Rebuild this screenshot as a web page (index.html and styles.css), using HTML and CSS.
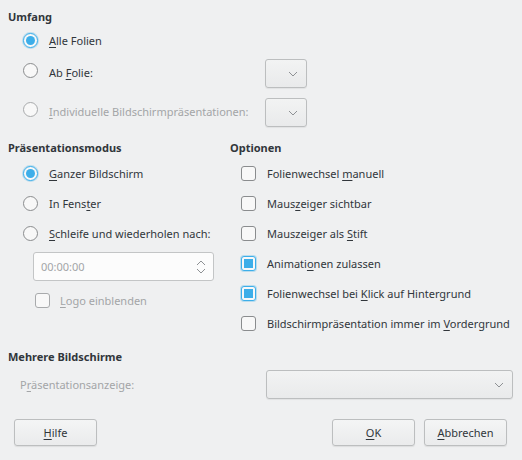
FILE: index.html
```html
<!DOCTYPE html>
<html lang="de">
<head>
<meta charset="utf-8">
<link rel="stylesheet" href="styles.css">
</head>
<body>
<div class="dialog">
  <h2 class="heading">Umfang</h2>
  <div class="range">
    <div class="row r-all">
      <span class="radio checked"></span><span class="label"><u>A</u>lle Folien</span>
    </div>
    <div class="row r-from">
      <span class="radio"></span><span class="label">Ab <u>F</u>olie:</span>
      <span class="combo small"><svg class="chev" viewBox="0 0 10 6"><path d="M1 1l4 4 4-4"/></svg></span>
    </div>
    <div class="row r-custom disabled">
      <span class="radio"></span><span class="label"><u>I</u>ndividuelle Bildschirmpräsentationen:</span>
      <span class="combo small"><svg class="chev" viewBox="0 0 10 6"><path d="M1 1l4 4 4-4"/></svg></span>
    </div>
  </div>

  <div class="columns">
    <div class="col left">
      <h2 class="heading">Präsentationsmodus</h2>
      <div class="row"><span class="radio checked"></span><span class="label"><u>G</u>anzer Bildschirm</span></div>
      <div class="row"><span class="radio"></span><span class="label">In Fens<u>t</u>er</span></div>
      <div class="row"><span class="radio"></span><span class="label"><u>S</u>chleife und wiederholen nach:</span></div>
      <div class="spin">
        <span class="spin-text">00:00:00</span>
        <svg class="spin-arrows" viewBox="0 0 10 14"><path d="M1 5l4-4 4 4M1 9l4 4 4-4"/></svg>
      </div>
      <div class="row logo disabled"><span class="check"></span><span class="label"><u>L</u>ogo einblenden</span></div>
    </div>
    <div class="col right">
      <h2 class="heading">Optionen</h2>
      <div class="row"><span class="check"></span><span class="label">Folienwechsel <u>m</u>anuell</span></div>
      <div class="row"><span class="check"></span><span class="label">Maus<u>z</u>eiger sichtbar</span></div>
      <div class="row"><span class="check"></span><span class="label">Mauszeiger als <u>S</u>tift</span></div>
      <div class="row"><span class="check checked"></span><span class="label">Animati<u>o</u>nen zulassen</span></div>
      <div class="row"><span class="check checked"></span><span class="label">Folienwechsel bei <u>K</u>lick auf Hintergrund</span></div>
      <div class="row"><span class="check"></span><span class="label">Bildschirmpräsentation immer im <u>V</u>ordergrund</span></div>
    </div>
  </div>

  <h2 class="heading multi">Mehrere Bildschirme</h2>
  <div class="display-row disabled">
    <span class="label">P<u>r</u>äsentationsanzeige:</span>
    <span class="combo wide"><svg class="chev" viewBox="0 0 10 6"><path d="M1 1l4 4 4-4"/></svg></span>
  </div>

  <div class="buttons">
    <button class="btn"><u>H</u>ilfe</button>
    <span class="spacer"></span>
    <button class="btn"><u>O</u>K</button>
    <button class="btn"><u>A</u>bbrechen</button>
  </div>
</div>
</body>
</html>
```

FILE: styles.css
```css
* { box-sizing: border-box; }
html, body {
  margin: 0;
  padding: 0;
  background: #eff0f1;
}
body {
  font-family: "Noto Sans", "DejaVu Sans", sans-serif;
  font-size: 11px;
  color: #31363b;
  width: 522px;
  height: 460px;
  overflow: hidden;
}
u { text-decoration: underline; text-underline-offset: 2px; text-decoration-thickness: 1px; }
.dialog {
  padding: 9px 8px 0 8px;
}
.heading {
  margin: 0;
  font-size: 11px;
  font-weight: bold;
  line-height: 16px;
  height: 16px;
}
.row {
  display: flex;
  align-items: center;
  height: 30px;
}
.radio {
  width: 15px;
  height: 15px;
  border-radius: 50%;
  border: 1px solid #8a8c8e;
  background: #f8f8f8;
  flex: none;
  position: relative;
}
.radio.checked {
  border: 1px solid #3daee9;
  box-shadow: 0 0 0 1px rgba(61,174,233,0.3);
}
.radio.checked::after {
  content: "";
  position: absolute;
  left: 2px; top: 2px;
  width: 9px; height: 9px;
  border-radius: 50%;
  background: #3daee9;
}
.check {
  width: 15px;
  height: 15px;
  border-radius: 3px;
  border: 1px solid #8a8c8e;
  background: #f8f8f8;
  flex: none;
  position: relative;
}
.check.checked {
  border-color: #3daee9;
  box-shadow: 0 0 0 1px rgba(61,174,233,0.3);
}
.check.checked::after {
  content: "";
  position: absolute;
  left: 2px; top: 2px;
  width: 9px; height: 9px;
  background: #3daee9;
}
.disabled .label { color: #a3a5a7; }
.disabled .radio, .disabled .check { border-color: #a8aaac; }

/* Umfang */
.range { padding-left: 15px; }
.range .label { margin-left: 11px; }
.r-all { height: 31px; margin-top: 0; }
.r-from, .r-custom { height: 39px; align-items: flex-start; }
.r-from { margin-top: 3px; }
.r-from .radio, .r-custom .radio { margin-top: 4px; }
.r-from .label, .r-custom .label { margin-top: 6px; }
.combo {
  margin-left: auto;
  height: 29px;
  border: 1px solid #bcbebf;
  border-radius: 3px;
  background: linear-gradient(#f2f3f3, #e9eaeb);
  display: flex;
  align-items: center;
  justify-content: flex-end;
  padding-right: 8px;
  box-shadow: 0 1px 1px rgba(0,0,0,0.06);
}
.combo.small { width: 42px; margin-right: 207px; }
.chev {
  width: 10px; height: 6px;
  fill: none;
  stroke: #8e9194;
  stroke-width: 1;
}

/* columns */
.columns {
  display: grid;
  grid-template-columns: 222px 1fr;
  margin-top: 3px;
}
.col .heading { margin-bottom: 2px; }
.left .row { padding-left: 15px; }
.left .row .label { margin-left: 11px; }
.right .row { padding-left: 11px; }
.right .row .label { margin-left: 11px; }
.spin {
  margin: 4px 0 0 25px;
  width: 181px;
  height: 29px;
  border: 1px solid #c3c5c6;
  border-radius: 3px;
  background: #fcfcfc;
  display: flex;
  align-items: center;
  padding: 0 7px 0 7px;
}
.spin-text { color: #a3a5a7; flex: 1; }
.spin-arrows {
  width: 10px; height: 14px;
  fill: none;
  stroke: #8e9194;
  stroke-width: 1;
}
.left .row.logo { padding-left: 27px; height: 36px; padding-top: 2px; }
.left .row.logo .label { margin-left: 10px; }

/* multi */
.heading.multi { margin-top: 11px; }
.display-row {
  display: flex;
  align-items: center;
  height: 29px;
  margin-top: 5px;
  padding-left: 12px;
}
.combo.wide { width: 247px; margin-right: 1px; }

/* buttons */
.buttons {
  display: flex;
  gap: 9px;
  margin-top: 20px;
  padding: 0 7px 0 6px;
}
.spacer { flex: 1; }
.btn {
  width: 83px;
  height: 27px;
  font-family: inherit;
  font-size: 11px;
  color: #31363b;
  border: 1px solid #bcbebf;
  border-radius: 3px;
  background: linear-gradient(#f4f5f5, #eaebec);
  box-shadow: 0 1px 1px rgba(0,0,0,0.08);
  padding: 0;
}
```
